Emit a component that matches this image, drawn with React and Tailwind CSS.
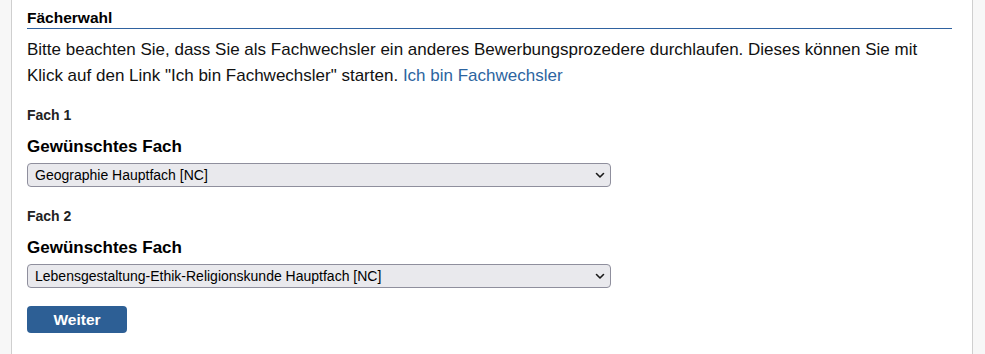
import React from "react";

function Select({ value }) {
  return (
    <div className="relative w-[584px] h-[24px] rounded-[4px] border border-[#8f8f9d] bg-[#e9e9ed] flex items-center pl-[7px] text-[14px] text-black">
      <span>{value}</span>
      <svg className="absolute right-[5px] top-[8px]" width="10" height="7" viewBox="0 0 10 7" fill="none">
        <path d="M1.5 1.5 L5 5 L8.5 1.5" stroke="#1a1a1a" strokeWidth="1.6" strokeLinecap="round" strokeLinejoin="round" />
      </svg>
    </div>
  );
}

export default function App() {
  return (
    <div className="w-[985px] h-[354px] bg-[#f7f7f7] flex" style={{ fontFamily: '"Liberation Sans", Arial, sans-serif' }}>
      <div className="ml-[11px] w-[962px] h-full bg-white border-l border-r border-[#cfcfcf] pl-[15px] pr-[20px]">
        <div className="pt-[8px]">
          <h2 className="text-[15.5px] font-bold text-black leading-[20px]">Fächerwahl</h2>
          <div className="h-[1px] bg-[#2f62a0]" />
        </div>
        <p className="mt-[8px] text-[17px] leading-[26px] text-[#111]">
          Bitte beachten Sie, dass Sie als Fachwechsler ein anderes Bewerbungsprozedere durchlaufen. Dieses können Sie mit Klick auf den Link "Ich bin Fachwechsler" starten.{" "}
          <a className="text-[#2c64a0]">Ich bin Fachwechsler</a>
        </p>
        <div className="mt-[18px] text-[14px] font-bold leading-[16px] text-[#222]">Fach 1</div>
        <div className="mt-[14px] text-[17px] font-bold leading-[20px] text-black">Gewünschtes Fach</div>
        <div className="mt-[6px]">
          <Select value="Geographie Hauptfach [NC]" />
        </div>
        <div className="mt-[21px] text-[14px] font-bold leading-[16px] text-[#222]">Fach 2</div>
        <div className="mt-[14px] text-[17px] font-bold leading-[20px] text-black">Gewünschtes Fach</div>
        <div className="mt-[6px]">
          <Select value="Lebensgestaltung-Ethik-Religionskunde Hauptfach [NC]" />
        </div>
        <button className="mt-[18px] w-[100px] h-[27px] rounded-[4px] bg-[#2d5f95] text-white text-[15.5px] font-bold">Weiter</button>
      </div>
    </div>
  );
}
